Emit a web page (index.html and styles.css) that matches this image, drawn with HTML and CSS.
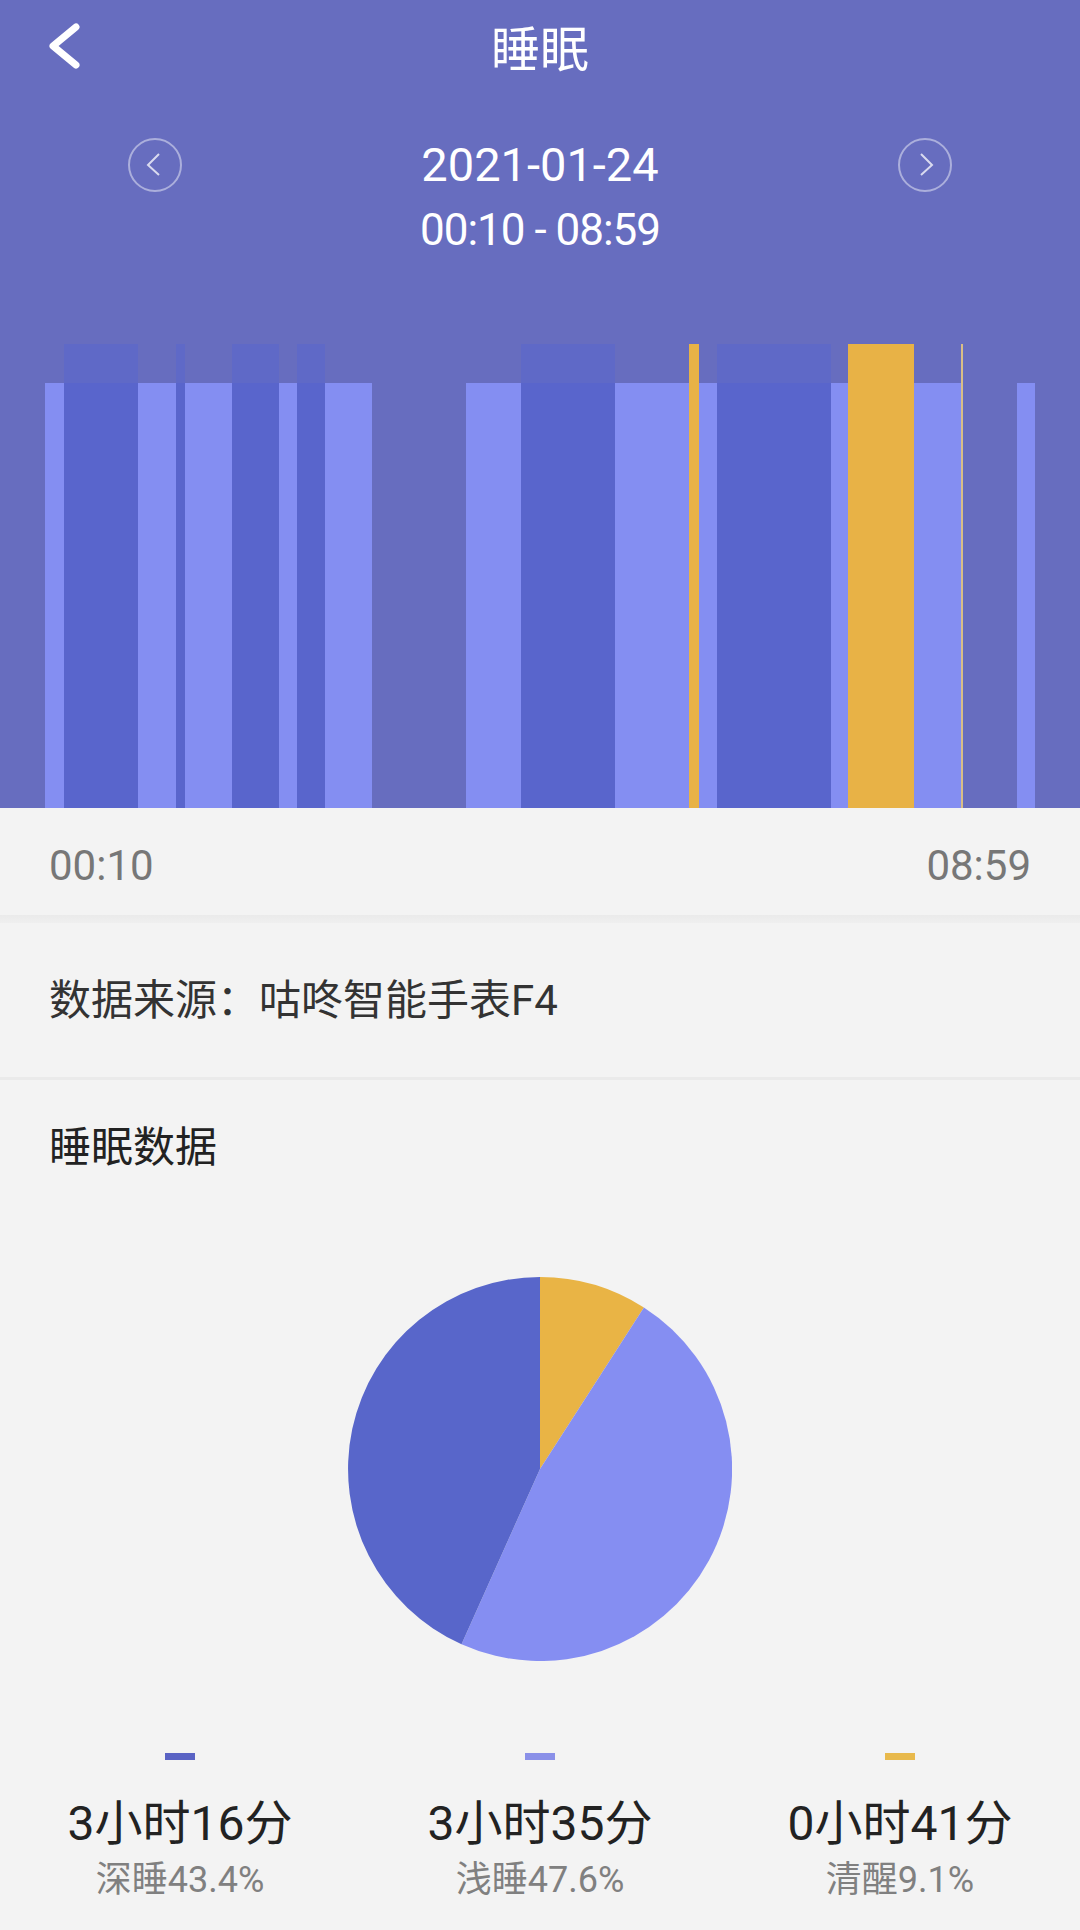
FILE: index.html
```html
<!DOCTYPE html>
<html lang="zh-CN">
<head>
<meta charset="utf-8">
<title>睡眠</title>
<link rel="stylesheet" href="styles.css">
</head>
<body>
<div class="page">
  <header class="header">
    <div class="appbar">
      <div class="back">
        <svg width="32" height="46" viewBox="0 0 32 46"><polyline points="28,4 5,23 28,42" fill="none" stroke="#ffffff" stroke-width="7" stroke-linecap="round" stroke-linejoin="round"/></svg>
      </div>
      <div class="title">睡眠</div>
      <div class="spacer"></div>
    </div>
    <div class="datenav">
      <div class="circle-btn">
        <svg width="56" height="56" viewBox="0 0 56 56"><circle cx="28" cy="28" r="26" fill="none" stroke="rgba(255,255,255,0.45)" stroke-width="2"/><polyline points="32,17 21,28 32,38" fill="none" stroke="rgba(255,255,255,0.75)" stroke-width="2"/></svg>
      </div>
      <div class="dates">
        <div class="date">2021-01-24</div>
        <div class="range">00:10 - 08:59</div>
      </div>
      <div class="circle-btn">
        <svg width="56" height="56" viewBox="0 0 56 56"><circle cx="28" cy="28" r="26" fill="none" stroke="rgba(255,255,255,0.45)" stroke-width="2"/><polyline points="24,17 35,28 24,38" fill="none" stroke="rgba(255,255,255,0.75)" stroke-width="2"/></svg>
      </div>
    </div>
    <div class="chart">
      <div class="seg light" style="width:19px"></div>
      <div class="seg deep" style="width:74px"></div>
      <div class="seg light" style="width:38px"></div>
      <div class="seg deep" style="width:9px"></div>
      <div class="seg light" style="width:47px"></div>
      <div class="seg deep" style="width:47px"></div>
      <div class="seg light" style="width:18px"></div>
      <div class="seg deep" style="width:28px"></div>
      <div class="seg light" style="width:47px"></div>
      <div class="seg none" style="width:94px"></div>
      <div class="seg light" style="width:55px"></div>
      <div class="seg deep" style="width:94px"></div>
      <div class="seg light" style="width:74px"></div>
      <div class="seg awake" style="width:10px"></div>
      <div class="seg light" style="width:18px"></div>
      <div class="seg deep" style="width:114px"></div>
      <div class="seg light" style="width:17px"></div>
      <div class="seg awake" style="width:66px"></div>
      <div class="seg light" style="width:47px"></div>
      <div class="seg awake thin" style="width:2px"></div>
      <div class="seg none" style="width:54px"></div>
      <div class="seg light" style="width:18px"></div>
    </div>
  </header>

  <div class="axis">
    <span>00:10</span>
    <span>08:59</span>
  </div>
  <div class="divider thick"></div>

  <div class="source">数据来源：咕咚智能手表F4</div>
  <div class="divider"></div>

  <section class="sleep-data">
    <div class="section-title">睡眠数据</div>
    <div class="pie">
      <svg width="384" height="384" viewBox="0 0 384 384">
        <path d="M192,192 L192,0 A192,192 0 0 1 295.9,30.5 Z" fill="#E9B445"/>
        <path d="M192,192 L295.9,30.5 A192,192 0 0 1 113.5,367.2 Z" fill="#858EF2"/>
        <path d="M192,192 L113.5,367.2 A192,192 0 0 1 192,0 Z" fill="#5866CA"/>
      </svg>
    </div>
    <div class="legend">
      <div class="legend-item">
        <div class="dash deep-c"></div>
        <div class="value">3小时16分</div>
        <div class="label">深睡43.4%</div>
      </div>
      <div class="legend-item">
        <div class="dash light-c"></div>
        <div class="value">3小时35分</div>
        <div class="label">浅睡47.6%</div>
      </div>
      <div class="legend-item">
        <div class="dash awake-c"></div>
        <div class="value">0小时41分</div>
        <div class="label">清醒9.1%</div>
      </div>
    </div>
  </section>
</div>
</body>
</html>
```

FILE: styles.css
```css
* {
  box-sizing: border-box;
}

html, body {
  margin: 0;
  padding: 0;
  background: #F3F3F3;
}

body {
  font-family: Roboto, "Noto Sans CJK SC", sans-serif;
  width: 1080px;
  min-height: 1930px;
}

.page {
  width: 1080px;
}

.header {
  background: #676DBF;
  height: 808px;
  display: flex;
  flex-direction: column;
  color: #ffffff;
}

.appbar {
  height: 92px;
  display: grid;
  grid-template-columns: 1fr auto 1fr;
  align-items: center;
}

.back {
  padding-left: 48px;
  display: flex;
  align-items: center;
}

.back svg {
  display: block;
}

.title {
  font-family: "Noto Sans CJK SC", sans-serif;
  font-size: 49px;
  line-height: 92px;
  color: #ffffff;
}

.datenav {
  display: flex;
  justify-content: space-between;
  align-items: flex-start;
  padding: 45px 127px 0 127px;
}

.circle-btn svg {
  display: block;
}

.dates {
  display: flex;
  flex-direction: column;
  align-items: center;
}

.date {
  font-size: 47px;
  line-height: 56px;
}

.range {
  font-size: 44px;
  line-height: 56px;
  margin-top: 9px;
  letter-spacing: -1px;
}

.chart {
  margin-top: auto;
  height: 464px;
  display: flex;
  align-items: flex-end;
  padding-left: 45px;
}

.seg {
  flex: none;
}

.seg.deep {
  height: 464px;
  background: linear-gradient(#5F69C7 0, #5F69C7 39px, #5965CC 39px);
}

.seg.light {
  height: 425px;
  background: #848EF2;
}

.seg.awake {
  height: 464px;
  background: #E8B246;
}

.seg.awake.thin {
  background: #D9BE86;
}

.seg.none {
  height: 0;
}

.axis {
  height: 107px;
  padding: 7px 49px 0 49px;
  display: flex;
  justify-content: space-between;
  align-items: center;
  font-size: 42px;
  color: #777777;
}

.divider {
  height: 3px;
  background: #EAEAEA;
}

.divider.thick {
  height: 8px;
  background: linear-gradient(#EAEAEA, #EFEFEF);
}

.source {
  height: 154px;
  padding: 1px 49px 0 49px;
  font-size: 42px;
  line-height: 153px;
  color: #333333;
}

.sleep-data {
  padding-top: 38px;
  display: flex;
  flex-direction: column;
}

.section-title {
  padding-left: 49px;
  font-size: 42px;
  line-height: 60px;
  color: #222222;
}

.pie {
  margin-top: 99px;
  display: flex;
  justify-content: center;
}

.pie svg {
  display: block;
}

.legend {
  margin-top: 92px;
  display: grid;
  grid-template-columns: repeat(3, 1fr);
}

.legend-item {
  display: flex;
  flex-direction: column;
  align-items: center;
}

.dash {
  width: 30px;
  height: 7px;
}

.deep-c {
  background: #5A63C4;
}

.light-c {
  background: #8A90E8;
}

.awake-c {
  background: #E8B94C;
}

.value {
  margin-top: 34px;
  font-size: 48px;
  line-height: 60px;
  color: #222222;
}

.label {
  margin-top: 4px;
  font-size: 36px;
  line-height: 44px;
  color: #808080;
}
```
